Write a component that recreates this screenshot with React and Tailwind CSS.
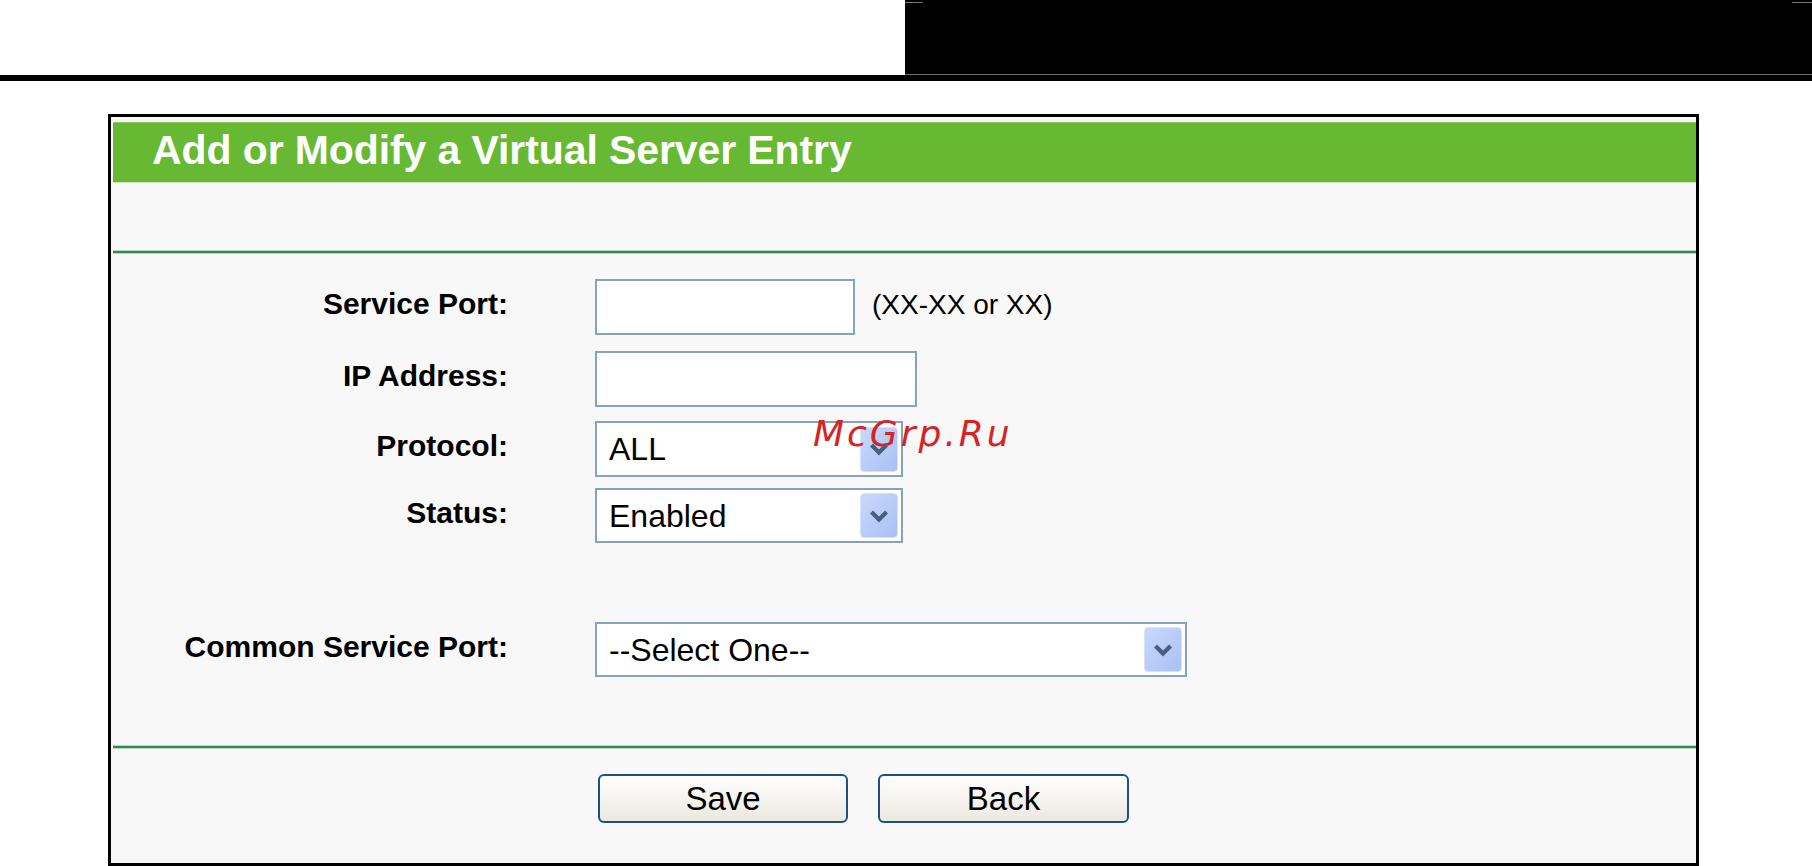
function Chevron() {
  return (
    <svg viewBox="0 0 24 24" className="w-[24px] h-[24px]">
      <path d="M4.5 8 L12 15.5 L19.5 8" fill="none" stroke="#4a5c80" strokeWidth="4.2" strokeLinejoin="miter" />
    </svg>
  );
}

function SelectBox({ value, className }) {
  return (
    <div className={"h-full border-2 border-[#86a2c0] bg-white flex items-center justify-between pl-[12px] pr-[3px] " + className}>
      <span className="text-[32px] text-black leading-none">{value}</span>
      <div className="w-[38px] h-[45px] rounded-[4px] border border-[#d6e2fb] bg-gradient-to-br from-[#c9d9fd] to-[#a9c0f3] flex items-center justify-center">
        <Chevron />
      </div>
    </div>
  );
}

function Row({ label, className, children }) {
  return (
    <div className={"flex items-center " + className}>
      <div className="w-[395px] text-right text-[30px] font-bold text-black leading-none pb-[6px]">{label}</div>
      <div className="ml-[87px] h-full flex items-center">{children}</div>
    </div>
  );
}

function Divider() {
  return (
    <div>
      <div className="h-[1px] bg-[#b9d8c2]" />
      <div className="h-[2px] bg-[#3c8258]" />
      <div className="h-[1px] bg-[#b9d8c2]" />
    </div>
  );
}

export default function App() {
  return (
    <div className="relative w-[1812px] h-[866px] bg-white overflow-hidden font-['Liberation_Sans',Arial,sans-serif]">
      {/* top strip */}
      <div className="flex h-[75px]">
        <div className="flex-1 bg-white" />
        <div className="w-[907px] bg-black flex flex-col justify-between">
          <div className="flex justify-between pt-[2px]">
            <div className="w-[18px] h-[1px] bg-[#777]" />
            <div className="w-[20px] h-[1px] bg-[#777]" />
          </div>
          <div className="h-[1px] bg-[#6a6a6a]" />
        </div>
      </div>
      <div className="h-[6px] bg-black" />

      {/* panel */}
      <div className="mt-[33px] ml-[108px] w-[1591px] h-[752px] border-[3px] border-black bg-[#f8f8f8] flex flex-col pt-[5px] pl-[2px]">
        <div className="h-[61px] bg-[#67b934] border-t border-[#8fcb63] border-b border-b-[#cfe6bd] flex items-center pl-[39px] pb-[4px]">
          <h1 className="text-[41px] font-bold text-white leading-none tracking-[-0.1px]">Add or Modify a Virtual Server Entry</h1>
        </div>
        <div className="h-[67px]" />
        <Divider />

        <div className="h-[491px] flex flex-col pt-[25px]">
          <Row label="Service Port:" className="h-[56px]">
            <div className="w-[260px] h-full border-2 border-[#86a2c0] bg-white" />
            <span className="ml-[17px] text-[28px] text-black leading-none pb-[4px]">(XX-XX or XX)</span>
          </Row>
          <Row label="IP Address:" className="h-[56px] mt-[16px]">
            <div className="w-[322px] h-full border-2 border-[#86a2c0] bg-white" />
          </Row>
          <Row label="Protocol:" className="h-[56px] mt-[14px]">
            <SelectBox value="ALL" className="w-[308px]" />
          </Row>
          <Row label="Status:" className="h-[55px] mt-[11px]">
            <SelectBox value="Enabled" className="w-[308px]" />
          </Row>
          <Row label="Common Service Port:" className="h-[55px] mt-[79px]">
            <SelectBox value="--Select One--" className="w-[592px]" />
          </Row>
        </div>

        <Divider />

        <div className="flex gap-[30px] pl-[485px] pt-[25px]">
          <button className="w-[250px] h-[49px] border-2 border-[#1f4f88] rounded-[6px] bg-gradient-to-b from-white to-[#ebe8df] text-[33px] text-black leading-none">Save</button>
          <button className="w-[251px] h-[49px] border-2 border-[#1f4f88] rounded-[6px] bg-gradient-to-b from-white to-[#ebe8df] text-[33px] text-black leading-none">Back</button>
        </div>
      </div>

      {/* watermark */}
      <div className="absolute left-[813px] top-[416px] text-[36px] italic leading-none tracking-[3px] text-[#d62424] font-['DejaVu_Sans',sans-serif]">
        McGrp.Ru
      </div>
    </div>
  );
}
